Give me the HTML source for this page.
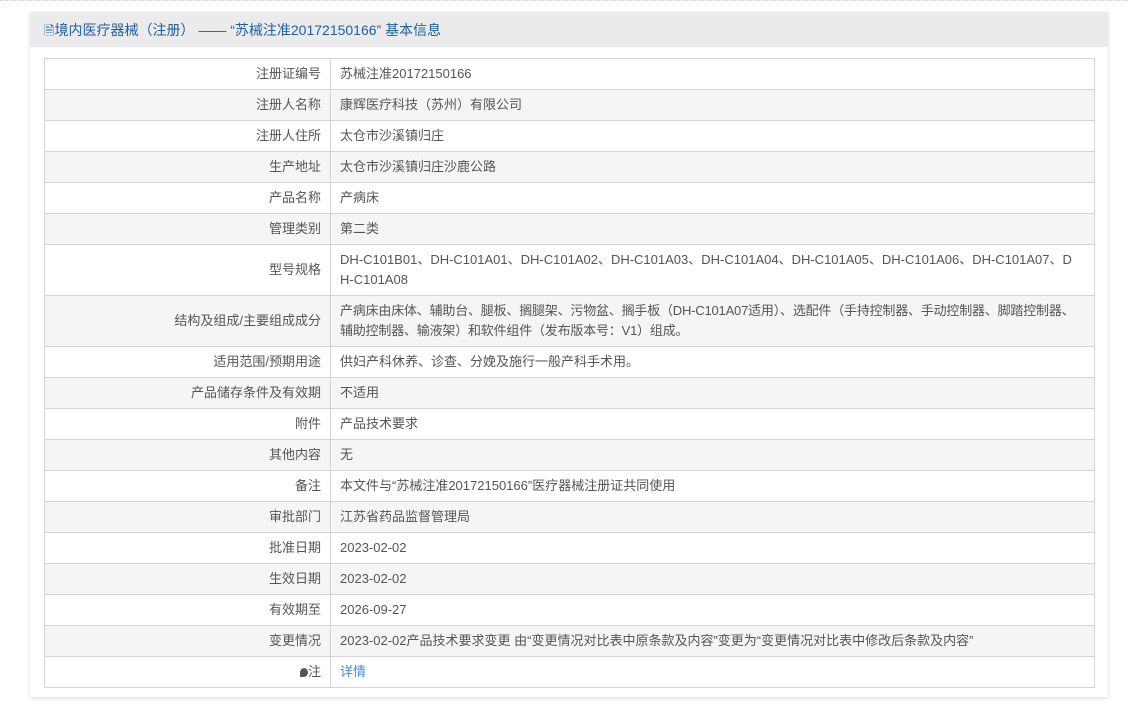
<!DOCTYPE html>
<html><head><meta charset="utf-8"><style>
body{margin:0;width:1128px;height:712px;background:#fff;font-family:"Liberation Sans","Noto Sans CJK SC",sans-serif;font-size:13px;color:#555;position:relative;overflow:hidden}
.top{position:absolute;left:0;top:0;width:1128px;border-top:1px dotted #ccc}
.panel{position:absolute;left:30px;top:12px;width:1078px;height:685px;background:#fff;box-shadow:0 1px 4px rgba(0,0,0,.15)}
.hd{height:35px;background:#ebebeb;color:#1f5fa6;font-size:14px;line-height:36px;padding-left:14px}
table{position:absolute;left:14px;top:46px;width:1051px;border-collapse:collapse;border:1px solid #ccc;table-layout:fixed}
td{border:1px solid #d4d4d4;padding:0 9px;line-height:20px;height:30px;vertical-align:middle;white-space:nowrap}
td.l{width:267px;text-align:right;color:#555}
tr:nth-child(even) td{background:#f5f5f5}
tr.t td{height:50px}
a{color:#3c8dde;text-decoration:none}
</style></head><body>
<div class="top"></div>
<div class="panel">
<div class="hd"><span style="font-size:13px">🗎</span>境内医疗器械（注册） ——  “苏械注准20172150166” 基本信息</div>
<table>
<tr><td class="l">注册证编号</td><td>苏械注准20172150166</td></tr>
<tr><td class="l">注册人名称</td><td>康辉医疗科技（苏州）有限公司</td></tr>
<tr><td class="l">注册人住所</td><td>太仓市沙溪镇归庄</td></tr>
<tr><td class="l">生产地址</td><td>太仓市沙溪镇归庄沙鹿公路</td></tr>
<tr><td class="l">产品名称</td><td>产病床</td></tr>
<tr><td class="l">管理类别</td><td>第二类</td></tr>
<tr class="t"><td class="l">型号规格</td><td>DH-C101B01、DH-C101A01、DH-C101A02、DH-C101A03、DH-C101A04、DH-C101A05、DH-C101A06、DH-C101A07、D<br>H-C101A08</td></tr>
<tr class="t"><td class="l">结构及组成/主要组成成分</td><td style="letter-spacing:-0.2px">产病床由床体、辅助台、腿板、搁腿架、污物盆、搁手板（DH-C101A07适用）、选配件（手持控制器、手动控制器、脚踏控制器、<br>辅助控制器、输液架）和软件组件（发布版本号：V1）组成。</td></tr>
<tr><td class="l">适用范围/预期用途</td><td>供妇产科休养、诊查、分娩及施行一般产科手术用。</td></tr>
<tr><td class="l">产品储存条件及有效期</td><td>不适用</td></tr>
<tr><td class="l">附件</td><td>产品技术要求</td></tr>
<tr><td class="l">其他内容</td><td>无</td></tr>
<tr><td class="l">备注</td><td>本文件与“苏械注准20172150166”医疗器械注册证共同使用</td></tr>
<tr><td class="l">审批部门</td><td>江苏省药品监督管理局</td></tr>
<tr><td class="l">批准日期</td><td>2023-02-02</td></tr>
<tr><td class="l">生效日期</td><td>2023-02-02</td></tr>
<tr><td class="l">有效期至</td><td>2026-09-27</td></tr>
<tr><td class="l">变更情况</td><td>2023-02-02产品技术要求变更 由“变更情况对比表中原条款及内容”变更为“变更情况对比表中修改后条款及内容”</td></tr>
<tr><td class="l"><span style="display:inline-block;width:8px;height:9px;background:#555;border-radius:50% 50% 50% 0;vertical-align:-1px"></span>注</td><td><a>详情</a></td></tr>
</table>
</div>
</body></html>
